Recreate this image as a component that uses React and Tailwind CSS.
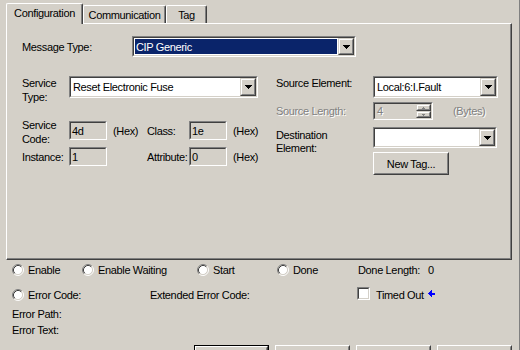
import React from "react";

const OUT_SUNK = "border border-t-[#808080] border-l-[#808080] border-r-white border-b-white";
const IN_SUNK = "border border-t-[#404040] border-l-[#404040] border-r-[#d4d0c8] border-b-[#d4d0c8]";
const OUT_BTN = "border border-t-white border-l-white border-r-[#404040] border-b-[#404040]";
const IN_BTN = "border border-t-[#d4d0c8] border-l-[#d4d0c8] border-r-[#808080] border-b-[#808080]";
const OUT_CB = "border border-t-[#d4d0c8] border-l-[#d4d0c8] border-r-[#404040] border-b-[#404040]";
const IN_CB = "border border-t-white border-l-white border-r-[#808080] border-b-[#808080]";
const DIS = "text-[#808080] [text-shadow:1px_1px_0_#fff]";

function Sunken({ className = "", inner = "", children }) {
  return (
    <div className={`${OUT_SUNK} ${className}`}>
      <div className={`${IN_SUNK} w-full h-full flex items-stretch ${inner}`}>{children}</div>
    </div>
  );
}

function DownArrow({ color = "#000" }) {
  return (
    <svg width="7" height="4" viewBox="0 0 7 4" shapeRendering="crispEdges">
      <rect x="0" y="0" width="7" height="1" fill={color} />
      <rect x="1" y="1" width="5" height="1" fill={color} />
      <rect x="2" y="2" width="3" height="1" fill={color} />
      <rect x="3" y="3" width="1" height="1" fill={color} />
    </svg>
  );
}

function DropBtn() {
  return (
    <div className={`${OUT_CB} w-[16px] h-full shrink-0 bg-[#d4d0c8]`}>
      <div className={`${IN_CB} w-full h-full flex items-center justify-center`}>
        <DownArrow />
      </div>
    </div>
  );
}

function Combo({ className, value, selected }) {
  return (
    <Sunken className={className} inner="bg-white">
      {selected ? (
        <div className="flex-1 p-[1px] flex">
          <div className="flex-1 bg-[#0a246a] text-white flex items-center pl-[1px]">{value}</div>
        </div>
      ) : (
        <div className="flex-1 flex items-center pl-[2px]">{value}</div>
      )}
      <DropBtn />
    </Sunken>
  );
}

function Field({ value }) {
  return (
    <Sunken className="w-[38px] h-[19px]" inner="bg-[#d4d0c8]">
      <div className="flex-1 flex items-center pl-[1px]">{value}</div>
    </Sunken>
  );
}

function SpinHalf({ up }) {
  return (
    <div className={`${OUT_CB} w-full h-[7px] bg-[#d4d0c8]`}>
      <div className={`${IN_CB} w-full h-full flex items-center justify-center`}>
        <svg width="3" height="2" viewBox="0 0 3 2" shapeRendering="crispEdges">
          {up ? (
            <>
              <rect x="1" y="0" width="1" height="1" fill="#808080" />
              <rect x="0" y="1" width="3" height="1" fill="#808080" />
            </>
          ) : (
            <>
              <rect x="0" y="0" width="3" height="1" fill="#808080" />
              <rect x="1" y="1" width="1" height="1" fill="#808080" />
            </>
          )}
        </svg>
      </div>
    </div>
  );
}

function Radio() {
  return (
    <svg width="12" height="12" viewBox="0 0 12 12" className="shrink-0">
      <circle cx="6" cy="6" r="4.5" fill="#fff" />
      <path d="M2.11 9.89 A5.5 5.5 0 0 1 9.89 2.11" stroke="#808080" fill="none" />
      <path d="M9.89 2.11 A5.5 5.5 0 0 1 2.11 9.89" stroke="#fff" fill="none" />
      <path d="M2.82 9.18 A4.5 4.5 0 0 1 9.18 2.82" stroke="#404040" fill="none" />
      <path d="M9.18 2.82 A4.5 4.5 0 0 1 2.82 9.18" stroke="#d4d0c8" fill="none" />
    </svg>
  );
}

function RadioItem({ label, className }) {
  return (
    <div className={`flex items-center ${className}`}>
      <Radio />
      <span className="ml-[4px]">{label}</span>
    </div>
  );
}

function PushBtn({ isDefault, children, className = "" }) {
  const inner = (
    <div className={`${OUT_BTN} w-full h-full`}>
      <div className={`${IN_BTN} w-full h-full flex items-center justify-center`}>{children}</div>
    </div>
  );
  return (
    <div className={`${className} bg-[#d4d0c8] shrink-0`}>
      {isDefault ? <div className="w-full h-full border border-black">{inner}</div> : inner}
    </div>
  );
}

export default function App() {
  return (
    <div className="w-[520px] h-[350px] bg-[#d4d0c8] border-r border-r-[#808080] overflow-hidden text-[11px] leading-[14px] text-black tracking-[-0.35px] [font-family:'Liberation_Sans',Arial,sans-serif]">
      <div className="pl-[6px] pt-[3px]">
        <div className="flex items-end h-[20px]">
          <div className="relative z-10 -mb-px h-[21px] w-[77px] bg-[#d4d0c8] border-t border-l border-r border-t-white border-l-white border-r-[#404040] rounded-tl-[2px] rounded-tr-[2px] shadow-[inset_-1px_0_0_#808080] flex justify-center pt-[2px]">
            Configuration
          </div>
          <div className="h-[18px] w-[83px] bg-[#d4d0c8] border-t border-l border-r border-t-white border-l-white border-r-[#404040] rounded-tl-[2px] rounded-tr-[2px] shadow-[inset_-1px_0_0_#808080] flex justify-center pt-[2px]">
            Communication
          </div>
          <div className="h-[18px] w-[41px] bg-[#d4d0c8] border-t border-l border-r border-t-white border-l-white border-r-[#404040] rounded-tl-[2px] rounded-tr-[2px] shadow-[inset_-1px_0_0_#808080] flex justify-center pt-[2px]">
            Tag
          </div>
        </div>
        <div className="w-[506px] h-[237px] border border-t-white border-l-white border-r-[#404040] border-b-[#404040] shadow-[inset_-1px_-1px_0_#808080] pt-[12px] pl-[15px]">
          <div className="flex items-center h-[21px]">
            <div className="w-[110px]">Message Type:</div>
            <Combo className="w-[224px] h-[21px]" value="CIP Generic" selected />
          </div>
          <div className="flex mt-[19px]">
            <div className="w-[254px] shrink-0">
              <div className="flex h-[22px]">
                <div className="w-[47px] shrink-0">
                  Service
                  <br />
                  Type:
                </div>
                <Combo className="w-[189px] h-[22px]" value="Reset Electronic Fuse" />
              </div>
              <div className="flex items-center h-[19px] mt-[23px]">
                <div className="w-[47px] shrink-0 self-start -mt-[3px]">
                  Service
                  <br />
                  Code:
                </div>
                <Field value="4d" />
                <div className="w-[40px] pl-[6px]">(Hex)</div>
                <div className="w-[42px]">Class:</div>
                <Field value="1e" />
                <div className="pl-[6px]">(Hex)</div>
              </div>
              <div className="flex items-center h-[19px] mt-[7px]">
                <div className="w-[47px] shrink-0">Instance:</div>
                <Field value="1" />
                <div className="w-[40px]" />
                <div className="w-[42px]">Attribute:</div>
                <Field value="0" />
                <div className="pl-[6px]">(Hex)</div>
              </div>
            </div>
            <div className="flex-1">
              <div className="flex h-[22px]">
                <div className="w-[97px] shrink-0">Source Element:</div>
                <Combo className="w-[125px] h-[22px]" value="Local:6:I.Fault" />
              </div>
              <div className="flex items-center h-[18px] mt-[4px]">
                <div className={`w-[97px] shrink-0 ${DIS}`}>Source Length:</div>
                <Sunken className="w-[60px] h-[18px]" inner="bg-[#d4d0c8]">
                  <div className={`flex-1 flex items-center pl-[2px] ${DIS}`}>4</div>
                  <div className="w-[15px] flex flex-col">
                    <SpinHalf up />
                    <SpinHalf />
                  </div>
                </Sunken>
                <div className={`ml-[20px] ${DIS}`}>(Bytes)</div>
              </div>
              <div className="flex h-[21px] mt-[7px]">
                <div className="w-[97px] shrink-0 pt-[2px] leading-[13px]">
                  Destination
                  <br />
                  Element:
                </div>
                <Combo className="w-[124px] h-[21px]" value="" />
              </div>
              <div className="pl-[97px] mt-[4px]">
                <PushBtn className="w-[76px] h-[23px]">New Tag...</PushBtn>
              </div>
            </div>
          </div>
        </div>
      </div>

      <div className="pt-[3px] pl-[12px]">
        <div className="flex items-center h-[14px]">
          <RadioItem label="Enable" className="w-[70px]" />
          <RadioItem label="Enable Waiting" className="w-[115px]" />
          <RadioItem label="Start" className="w-[80px]" />
          <RadioItem label="Done" className="w-[81px]" />
          <div className="w-[70px]">Done Length:</div>
          <div>0</div>
        </div>
        <div className="flex items-center h-[14px] mt-[11px]">
          <RadioItem label="Error Code:" className="w-[138px]" />
          <div className="w-[207px]">Extended Error Code:</div>
          <div className={`${OUT_SUNK} w-[13px] h-[13px] -mt-[3px]`}>
            <div className={`${IN_SUNK} w-full h-full bg-white`} />
          </div>
          <div className="ml-[6px] w-[52px]">Timed Out</div>
          <svg width="8" height="7" viewBox="0 0 8 7" shapeRendering="crispEdges" className="-mt-[3px]">
            <polygon points="0,3.5 4,0 4,7" fill="#0000ff" />
            <rect x="4" y="2.5" width="3" height="2" fill="#0000ff" />
          </svg>
        </div>
        <div className="h-[14px] mt-[5px]">Error Path:</div>
        <div className="h-[14px] mt-[2px]">Error Text:</div>
      </div>
      <div className="flex gap-[6px] pl-[194px] mt-[8px]">
        <PushBtn isDefault className="w-[75px] h-[23px]" />
        <PushBtn className="w-[75px] h-[23px]" />
        <PushBtn className="w-[75px] h-[23px]" />
        <PushBtn className="w-[75px] h-[23px]" />
      </div>
    </div>
  );
}
